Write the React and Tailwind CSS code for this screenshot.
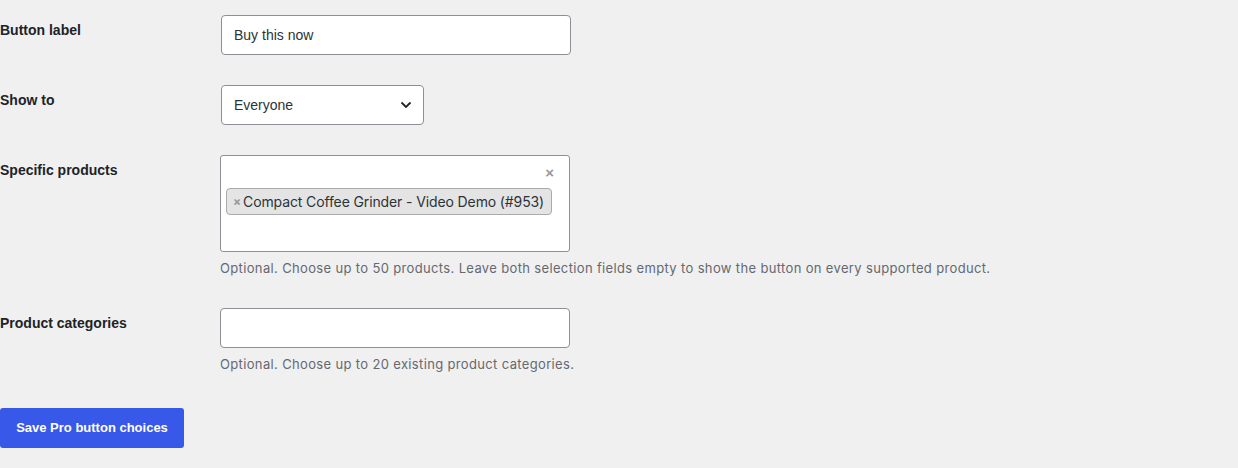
import React from 'react';

const font = { fontFamily: '"Liberation Sans", Arial, sans-serif' };
const inter = { fontFamily: 'Inter, "Liberation Sans", sans-serif' };

function Row({ label, children }) {
  return (
    <div className="flex">
      <div className="w-[220px] shrink-0 pt-5 pb-5 pr-2.5 text-[14px] leading-[20px] font-semibold text-[#1d2327]">
        {label}
      </div>
      <div className="py-[15px]">{children}</div>
    </div>
  );
}

function Help({ children }) {
  return (
    <p className="mt-[6px] whitespace-nowrap text-[13px] leading-[20px] tracking-[0.35px] text-[#646970]" style={inter}>
      {children}
    </p>
  );
}

export default function App() {
  return (
    <div className="min-h-[468px] w-[1238px] bg-[#f0f0f1]" style={font}>
      <Row label="Button label">
        <input
          defaultValue="Buy this now"
          className="ml-px block h-10 w-[350px] rounded border border-[#8c8f94] bg-white px-3 text-[14px] text-[#2c3338] outline-none"
        />
      </Row>
      <Row label="Show to">
        <div className="relative ml-px flex h-10 w-[203px] items-center rounded border border-[#8c8f94] bg-white pl-3 text-[14px] text-[#2c3338]">
          Everyone
          <svg className="absolute right-[11px] top-[15px]" width="12" height="8" viewBox="0 0 12 8" fill="none">
            <path d="M1.5 1.5 6 6l4.5-4.5" stroke="#1d2327" strokeWidth="1.8" />
          </svg>
        </div>
      </Row>
      <Row label="Specific products">
        <div className="relative h-[97px] w-[350px] rounded-[3px] border border-[#8c8f94] bg-white">
          <span className="absolute right-[15px] top-[8px] text-[15px] font-bold leading-[18px] text-[#999]">×</span>
          <div
            className="absolute left-[5px] top-[32px] flex h-[27px] items-center whitespace-nowrap rounded border border-[#aaa] bg-[#e4e4e4] pl-[6px] pr-[7px] text-[14px] tracking-[-0.12px] text-[#2c3338]"
            style={inter}
          >
            <span className="mr-[2px] text-[12px] font-bold text-[#999]">×</span>
            Compact Coffee Grinder - Video Demo (#953)
          </div>
        </div>
        <Help>
          Optional. Choose up to 50 products. Leave both selection fields empty to show the button on every supported product.
        </Help>
      </Row>
      <Row label="Product categories">
        <div className="h-10 w-[350px] rounded border border-[#8c8f94] bg-white" />
        <Help>Optional. Choose up to 20 existing product categories.</Help>
      </Row>
      <div className="pt-[19px]">
        <button className="h-10 w-[184px] rounded-[3px] bg-[#3858e9] text-[13px] font-semibold text-white">
          Save Pro button choices
        </button>
      </div>
    </div>
  );
}
